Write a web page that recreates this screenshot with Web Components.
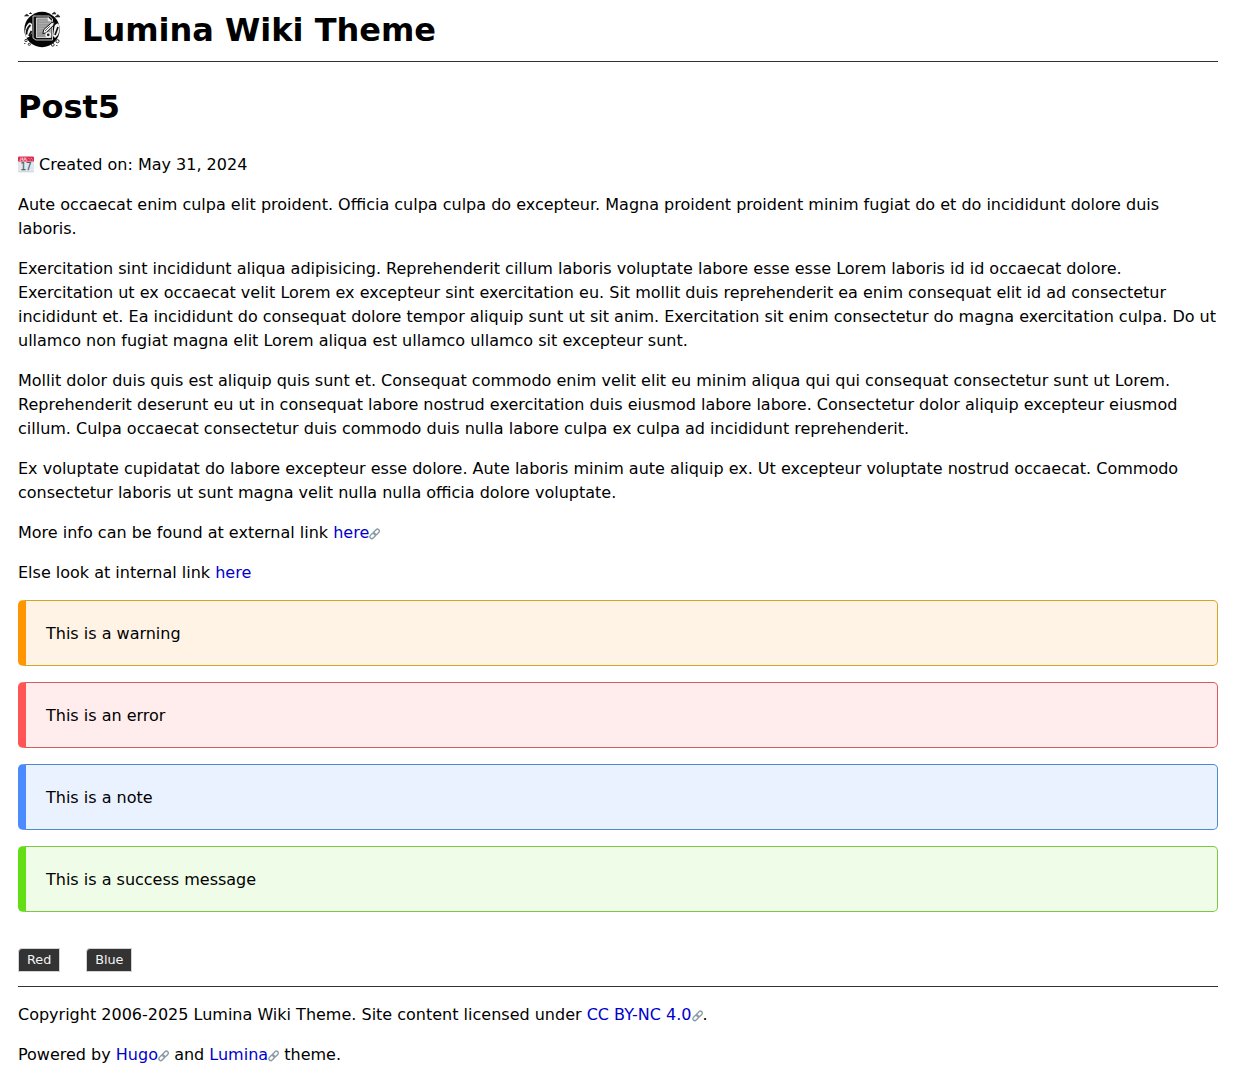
<!DOCTYPE html>
<html lang="en">
<head>
<meta charset="utf-8">
<title>Post5 - Lumina Wiki Theme</title>
<style>
html{background:#fff}
body{margin:0;padding:0 26px 0 18px;font:16px/24px "DejaVu Sans",sans-serif;color:#000}
</style>
</head>
<body>
<wiki-page>
  <wiki-header slot="header">Lumina Wiki Theme</wiki-header>
  <wiki-title>Post5</wiki-title>
  <wiki-text><calendar-icon></calendar-icon> Created on: May 31, 2024</wiki-text>
  <wiki-text>Aute occaecat enim culpa elit proident. Officia culpa culpa do excepteur. Magna proident proident minim fugiat do et do incididunt dolore duis laboris.</wiki-text>
  <wiki-text>Exercitation sint incididunt aliqua adipisicing. Reprehenderit cillum laboris voluptate labore esse esse Lorem laboris id id occaecat dolore. Exercitation ut ex occaecat velit Lorem ex excepteur sint exercitation eu. Sit mollit duis reprehenderit ea enim consequat elit id ad consectetur incididunt et. Ea incididunt do consequat dolore tempor aliquip sunt ut sit anim. Exercitation sit enim consectetur do magna exercitation culpa. Do ut ullamco non fugiat magna elit Lorem aliqua est ullamco ullamco sit excepteur sunt.</wiki-text>
  <wiki-text>Mollit dolor duis quis est aliquip quis sunt et. Consequat commodo enim velit elit eu minim aliqua qui qui consequat consectetur sunt ut Lorem. Reprehenderit deserunt eu ut in consequat labore nostrud exercitation duis eiusmod labore labore. Consectetur dolor aliquip excepteur eiusmod cillum. Culpa occaecat consectetur duis commodo duis nulla labore culpa ex culpa ad incididunt reprehenderit.</wiki-text>
  <wiki-text>Ex voluptate cupidatat do labore excepteur esse dolore. Aute laboris minim aute aliquip ex. Ut excepteur voluptate nostrud occaecat. Commodo consectetur laboris ut sunt magna velit nulla nulla officia dolore voluptate.</wiki-text>
  <wiki-text>More info can be found at external link <wiki-link external>here</wiki-link></wiki-text>
  <wiki-text>Else look at internal link <wiki-link>here</wiki-link></wiki-text>
  <notice-list>
    <wiki-notice kind="warning">This is a warning</wiki-notice>
    <wiki-notice kind="error">This is an error</wiki-notice>
    <wiki-notice kind="note">This is a note</wiki-notice>
    <wiki-notice kind="success">This is a success message</wiki-notice>
  </notice-list>
  <tag-list><wiki-tag>Red</wiki-tag><wiki-tag>Blue</wiki-tag></tag-list>
  <wiki-footer slot="footer">
    <wiki-text>Copyright 2006-2025 Lumina Wiki Theme. Site content licensed under <wiki-link external>CC BY-NC 4.0</wiki-link>.</wiki-text>
    <wiki-text>Powered by <wiki-link external>Hugo</wiki-link> and <wiki-link external>Lumina</wiki-link> theme.</wiki-text>
  </wiki-footer>
</wiki-page>
<script>
function define(name, html) {
  customElements.define(name, class extends HTMLElement {
    constructor() {
      super();
      this.attachShadow({mode: 'open'}).innerHTML = html;
    }
  });
}

define('wiki-page', `<style>:host{display:block}main{display:flow-root}</style>
<slot name="header"></slot><main><slot></slot></main><slot name="footer"></slot>`);

define('wiki-header', `<style>
:host{display:flex;align-items:flex-start;box-sizing:border-box;height:62px;border-bottom:1px solid #333;padding:6px 0 0 0}
wiki-logo{margin:0 16px 0 0}
h1{margin:0;font-size:32px;line-height:48px;font-weight:bold;white-space:nowrap}
</style><wiki-logo></wiki-logo><h1><slot></slot></h1>`);

define('wiki-logo', `<style>:host{display:block;width:48px;height:48px}svg{display:block}</style>
<svg width="48" height="48" viewBox="0 0 48 48" fill="none">
  <circle cx="24" cy="23.500" r="17.700" fill="#050505"/>
  <path d="M7 27c0-5 2-9.500 5-10.500l2 1.500v9l-3 4-3 1z" fill="#f5f5f5"/>
  <path d="M8.500 28.500c0-4 1.500-7.500 4-9.500M11 30l2.500-5" stroke="#111" stroke-width="1.800"/>
  <path d="M36.500 20c1.500-3 4-3.500 4.500-1 .8 3 .5 7-1 10l-3 3-2-2z" fill="#f2f2f2"/>
  <path d="M37 29l3-8" stroke="#111" stroke-width="1.700"/>
  <path d="M15 10h16.500l3 3V34H18l-3-2z" fill="#111" stroke="#ddd" stroke-width=".9"/>
  <path d="M18.500 12H30l3 3V31.500H18.500z" fill="#999" stroke="#dcdcdc" stroke-width=".9"/>
  <path d="M30 11v4h4" fill="#eee" stroke="#ddd" stroke-width=".6"/>
  <path d="M20.500 15h8M20.500 17.500h10M20.500 20h8M20.500 22.500h6M20.500 25h4" stroke="#b3b3b3" stroke-width=".8"/>
  <path d="M24.800 27.500l1-4 8-7 2.500-.500-.5 3-8 8z" fill="#f2f2f2" stroke="#111" stroke-width="1"/>
  <path d="M27 25l5-5" stroke="#444" stroke-width=".8"/>
  <circle cx="30.200" cy="28.800" r="2.100" fill="#222" stroke="#f4f4f4" stroke-width="1.500"/>
  <path d="M6.500 10l2.300-2 2 2zM11 8l1.500-1.500L14 8M34 8l2.500-2L38 8zM37 11l3-2.500 2 2.500z" fill="#222" stroke="#222" stroke-width=".6"/>
  <g fill="#fff" stroke="#222" stroke-width=".9"><circle cx="8" cy="34.500" r="1.200"/><circle cx="11.300" cy="38.300" r="1.100"/><circle cx="34.800" cy="38.800" r="1.400"/><circle cx="39.500" cy="35.200" r="1.600"/></g>
  <path d="M6 37.500h1.500M38 39.500h1.500" stroke="#555"/>
</svg>`);

define('calendar-icon', `<style>:host{display:inline-block;width:16px;height:17px;vertical-align:-3px;margin-top:-2px}svg{display:block}text{font:9.800px "DejaVu Sans Condensed","DejaVu Sans",sans-serif}</style>
<svg width="16" height="17" viewBox="0 0 16 17">
  <path d="M0 5h16v10.500l-.8.800H.8l-.8-.800z" fill="#e1e8ed"/>
  <path d="M0 15.200h16l-.8 1H.8z" fill="#ccd6dd"/>
  <path d="M.8.500h14.400l.8.800V5.500H0V1.300z" fill="#dd2e50"/>
  <path d="M3 1.500v2.700H1.500M4.600 1.500v2.700h1.700V1.500M7.800 1.500v2.700h1.500" fill="none" stroke="#fbd6dc" stroke-width=".9"/>
  <path d="M10.500 2.500h1M13 2.500h1M11.700 4h1M14 4h1" stroke="#f18b9f"/>
  <text x="8" y="14" text-anchor="middle" fill="#50606b" stroke="#50606b" stroke-width=".25">17</text>
</svg>`);

define('wiki-title', `<style>:host{display:block;margin:21px 0 22px}h1{margin:0;font-size:32px;line-height:48px}</style><h1><slot></slot></h1>`);

define('wiki-text', `<style>:host{display:block;margin:16px 0}p{margin:0}</style><p><slot></slot></p>`);

define('link-icon', `<style>:host{display:inline-block;width:11.100px;height:12px;vertical-align:-2px}svg{display:block;overflow:visible}</style>
<svg width="12" height="12" viewBox="0 0 12 12" fill="none" stroke="#8c9aa5" stroke-width="1.400">
  <rect x="-3.200" y="-1.900" width="6.400" height="3.800" rx="1.900" transform="translate(3.700 7.800) rotate(-45)"/>
  <rect x="-3.200" y="-1.900" width="6.400" height="3.800" rx="1.900" transform="translate(7.500 4) rotate(-45)"/>
</svg>`);

define('wiki-link', `<style>:host{display:inline}a{color:#0000cd;text-decoration:none}link-icon{display:none}:host([external]) link-icon{display:inline-block}</style><a href="#"><slot></slot><link-icon></link-icon></a>`);

define('notice-list', `<style>:host{display:flex;flex-direction:column;gap:16px;margin-top:-1px}</style><slot></slot>`);

define('wiki-notice', `<style>
:host{display:block;box-sizing:border-box;height:66px;padding:21px 20px 19px;border:1px solid var(--line);border-left:8px solid var(--bar);border-radius:5px;background:var(--fill)}
:host([kind=warning]){--bar:#ff9500;--line:#d5a526;--fill:#fff3e5}
:host([kind=error]){--bar:#ff5555;--line:#d95b60;--fill:#ffecec}
:host([kind=note]){--bar:#4b8bff;--line:#5189cf;--fill:#ebf2ff}
:host([kind=success]){--bar:#62de14;--line:#7bc842;--fill:#effce8}
</style><slot></slot>`);

define('tag-list', `<style>:host{display:flex;gap:26.300px;margin:36px 0 14px}</style><slot></slot>`);

define('wiki-tag', `<style>:host{display:block;box-sizing:border-box;height:24px;padding:0 7.500px 0 8px;border:1px solid #d3d3d3;border-radius:4px 0 0 0;background:#333;color:#f4f4f4;font-size:12.800px;line-height:22px}</style><slot></slot>`);

define('wiki-footer', `<style>:host{display:flow-root;border-top:1px solid #333;height:93px;overflow:hidden;box-sizing:border-box}</style><slot></slot>`);
</script>
</body>
</html>
